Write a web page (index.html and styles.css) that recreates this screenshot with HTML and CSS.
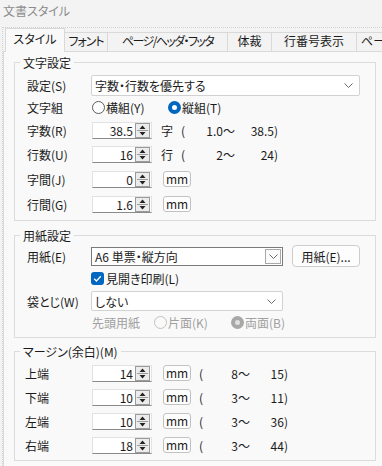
FILE: index.html
```html
<!DOCTYPE html>
<html lang="ja">
<head>
<meta charset="utf-8">
<title>文書スタイル</title>
<link rel="stylesheet" href="styles.css">
</head>
<body>
<div class="win">
  <div class="title">文書スタイル</div>
  <div class="tabctl">
    <div class="tabs">
      <div class="tab t1 active">スタイル</div>
      <div class="tab t2">フォント</div>
      <div class="tab t3">ページ/ヘッダ・フッタ</div>
      <div class="tab t4">体裁</div>
      <div class="tab t5">行番号表示</div>
      <div class="tab t6">ページ罫線</div>
    </div>
    <div class="panel">
      <fieldset class="grp g1">
        <legend>文字設定</legend>
        <div class="body">
          <span class="lbl">設定(S)</span>
          <div class="ctl"><div class="select wide"><span>字数・行数を優先する</span><svg class="chev" width="9" height="5" viewBox="0 0 9 5"><path d="M0.5 0.5 L4.5 4.5 L8.5 0.5" fill="none" stroke="#6a6a6a" stroke-width="1"/></svg></div></div>

          <span class="lbl">文字組</span>
          <div class="ctl">
            <span class="opt o1"><span class="radio"></span>横組(Y)</span>
            <span class="opt"><span class="radio on"></span>縦組(T)</span>
          </div>

          <span class="lbl">字数(R)</span>
          <div class="ctl">
            <div class="spin"><span class="val">38.5</span><span class="arrows"><svg width="13" height="15" viewBox="0 0 13 15"><path d="M3.5 6 L9.5 6 L6.5 2.5 Z" fill="#222"/><path d="M1 7.5 H12" stroke="#9a9a9a"/><path d="M3.5 9 L9.5 9 L6.5 12.5 Z" fill="#222"/></svg></span></div>
            <span class="unit">字</span><span class="paren">(</span><span class="from">1.0〜</span><span class="to">38.5)</span>
          </div>

          <span class="lbl">行数(U)</span>
          <div class="ctl">
            <div class="spin"><span class="val">16</span><span class="arrows"><svg width="13" height="15" viewBox="0 0 13 15"><path d="M3.5 6 L9.5 6 L6.5 2.5 Z" fill="#222"/><path d="M1 7.5 H12" stroke="#9a9a9a"/><path d="M3.5 9 L9.5 9 L6.5 12.5 Z" fill="#222"/></svg></span></div>
            <span class="unit">行</span><span class="paren">(</span><span class="from">2〜</span><span class="to">24)</span>
          </div>

          <span class="lbl">字間(J)</span>
          <div class="ctl">
            <div class="spin"><span class="val">0</span><span class="arrows"><svg width="13" height="15" viewBox="0 0 13 15"><path d="M3.5 6 L9.5 6 L6.5 2.5 Z" fill="#222"/><path d="M1 7.5 H12" stroke="#9a9a9a"/><path d="M3.5 9 L9.5 9 L6.5 12.5 Z" fill="#222"/></svg></span></div>
            <span class="mm">mm</span>
          </div>

          <span class="lbl">行間(G)</span>
          <div class="ctl">
            <div class="spin"><span class="val">1.6</span><span class="arrows"><svg width="13" height="15" viewBox="0 0 13 15"><path d="M3.5 6 L9.5 6 L6.5 2.5 Z" fill="#222"/><path d="M1 7.5 H12" stroke="#9a9a9a"/><path d="M3.5 9 L9.5 9 L6.5 12.5 Z" fill="#222"/></svg></span></div>
            <span class="mm">mm</span>
          </div>
        </div>
      </fieldset>

      <fieldset class="grp g2">
        <legend>用紙設定</legend>
        <div class="body">
          <span class="lbl">用紙(E)</span>
          <div class="ctl">
            <div class="combo"><span>A6 単票・縦方向</span><span class="dropbtn"><svg width="9" height="5" viewBox="0 0 9 5"><path d="M0.5 0.5 L4.5 4.5 L8.5 0.5" fill="none" stroke="#6a6a6a" stroke-width="1"/></svg></span></div>
            <span class="btn">用紙(E)...</span>
          </div>

          <span class="lbl"></span>
          <div class="ctl"><span class="check"><svg width="13" height="13" viewBox="0 0 13 13"><path d="M3.2 6.8 L5.4 9 L9.8 4.3" fill="none" stroke="#fff" stroke-width="1.3"/></svg></span><span class="cktext">見開き印刷(L)</span></div>

          <span class="lbl">袋とじ(W)</span>
          <div class="ctl"><div class="select mid"><span>しない</span><svg class="chev" width="9" height="5" viewBox="0 0 9 5"><path d="M0.5 0.5 L4.5 4.5 L8.5 0.5" fill="none" stroke="#6a6a6a" stroke-width="1"/></svg></div></div>

          <span class="lbl"></span>
          <div class="ctl dis">
            <span class="head">先頭用紙</span>
            <span class="opt o2"><span class="radio off"></span>片面(K)</span>
            <span class="opt"><span class="radio offon"></span>両面(B)</span>
          </div>
        </div>
      </fieldset>

      <fieldset class="grp g3">
        <legend>マージン(余白)(M)</legend>
        <div class="body">
          <span class="lbl">上端</span>
          <div class="ctl">
            <div class="spin"><span class="val">14</span><span class="arrows"><svg width="13" height="15" viewBox="0 0 13 15"><path d="M3.5 6 L9.5 6 L6.5 2.5 Z" fill="#222"/><path d="M1 7.5 H12" stroke="#9a9a9a"/><path d="M3.5 9 L9.5 9 L6.5 12.5 Z" fill="#222"/></svg></span></div>
            <span class="mm">mm</span><span class="paren p2">(</span><span class="from f2">8〜</span><span class="to t2">15)</span>
          </div>

          <span class="lbl">下端</span>
          <div class="ctl">
            <div class="spin"><span class="val">10</span><span class="arrows"><svg width="13" height="15" viewBox="0 0 13 15"><path d="M3.5 6 L9.5 6 L6.5 2.5 Z" fill="#222"/><path d="M1 7.5 H12" stroke="#9a9a9a"/><path d="M3.5 9 L9.5 9 L6.5 12.5 Z" fill="#222"/></svg></span></div>
            <span class="mm">mm</span><span class="paren p2">(</span><span class="from f2">3〜</span><span class="to t2">11)</span>
          </div>

          <span class="lbl">左端</span>
          <div class="ctl">
            <div class="spin"><span class="val">10</span><span class="arrows"><svg width="13" height="15" viewBox="0 0 13 15"><path d="M3.5 6 L9.5 6 L6.5 2.5 Z" fill="#222"/><path d="M1 7.5 H12" stroke="#9a9a9a"/><path d="M3.5 9 L9.5 9 L6.5 12.5 Z" fill="#222"/></svg></span></div>
            <span class="mm">mm</span><span class="paren p2">(</span><span class="from f2">3〜</span><span class="to t2">36)</span>
          </div>

          <span class="lbl">右端</span>
          <div class="ctl">
            <div class="spin"><span class="val">18</span><span class="arrows"><svg width="13" height="15" viewBox="0 0 13 15"><path d="M3.5 6 L9.5 6 L6.5 2.5 Z" fill="#222"/><path d="M1 7.5 H12" stroke="#9a9a9a"/><path d="M3.5 9 L9.5 9 L6.5 12.5 Z" fill="#222"/></svg></span></div>
            <span class="mm">mm</span><span class="paren p2">(</span><span class="from f2">3〜</span><span class="to t2">44)</span>
          </div>
        </div>
      </fieldset>
    </div>
  </div>
</div>
</body>
</html>
```

FILE: styles.css
```css
* { box-sizing: border-box; }
html, body { margin: 0; padding: 0; }
body {
  width: 382px;
  height: 466px;
  overflow: hidden;
  background: #f3f3f3;
  font-family: "Noto Sans CJK JP", "Noto Sans", sans-serif;
  font-size: 12px;
  color: #1b1b1b;
  font-feature-settings: "palt";
}
.win { width: 382px; height: 466px; overflow: hidden; }
.title {
  height: 27px;
  padding: 2px 0 0 3px;
  line-height: 17px;
  color: #8c8c8c;
}
.tabctl {
  margin-left: 2px;
  border-top: 1px dotted #d2d2d2;
  border-left: 1px dotted #d2d2d2;
  height: 439px;
}
.tabs {
  display: flex;
  align-items: flex-end;
  height: 23px;
  padding-left: 2px;
  white-space: nowrap;
}
.tab {
  height: 19px;
  line-height: 16px;
  padding: 0;
  text-align: center;
  border: 1px solid #d9d9d9;
  border-bottom: none;
  margin-left: -1px;
  background: #f3f3f3;
  flex: none;
  overflow: hidden;
}
.tab.t1 { width: 60px; }
.tab.t2 { width: 44px; letter-spacing: -1px; }
.tab.t3 { width: 121px; letter-spacing: -1.6px; }
.tab.t4 { width: 45px; }
.tab.t5 { width: 86px; }
.tab.t6 { width: 70px; text-align: left; padding-left: 4px; }
.tab.active {
  margin-left: 0;
  height: 24px;
  line-height: 19px;
  margin-bottom: -1px;
  background: #f9f9f9;
  position: relative;
  z-index: 1;
}
.panel {
  margin-left: 0;
  margin-right: -20px;
  height: 420px;
  background: #f9f9f9;
  border-top: 1px solid #d9d9d9;
  border-left: 1px solid #d9d9d9;
  padding: 3px 0 0 10px;
}
fieldset.grp {
  margin: 0;
  padding: 0;
  width: 362px;
  min-width: 0;
  border: 1px solid #dcdcdc;
}
legend {
  padding: 0 3px;
  margin-left: 5px;
  line-height: 15px;
  font-size: 12px;
}
.g2 { margin-top: 7px !important; }
.g3 { margin-top: 6px !important; }
.body {
  display: grid;
  grid-template-columns: 65px auto;
  padding: 4px 0 4px 12px;
}
.g1 .body { grid-template-rows: 22px 23px 23px 24px 26px 24px; }
.g2 .body { grid-template-rows: 22px 23px 22px 21px; padding-top: 2px; }
.g3 .body { grid-template-rows: 24px 24px 24px 24px; padding: 2px 0 3px 10px; grid-template-columns: 67px auto; }
.lbl { display: flex; align-items: center; white-space: nowrap; }
.ctl { display: flex; align-items: center; white-space: nowrap; }

.select {
  display: flex;
  align-items: center;
  justify-content: space-between;
  height: 21px;
  background: #fff;
  border: 1px solid #d2d2d2;
  border-radius: 2px;
  padding: 0 6px 0 3px;
}
.select.wide { width: 269px; margin-left: -1px; }
.select.mid { width: 192px; height: 20px; margin-left: -1px; }

.combo {
  display: flex;
  align-items: center;
  justify-content: space-between;
  width: 192px;
  height: 19px;
  margin-left: -1px;
  background: #fff;
  border: 1px solid #7a7a7a;
  padding: 0 1px 0 3px;
}
.dropbtn {
  width: 16px;
  height: 15px;
  border: 1px solid #a9a9a9;
  background: #fafafa;
  display: flex;
  align-items: center;
  justify-content: center;
}
.btn {
  margin-left: 9px;
  width: 68px;
  height: 22px;
  border: 1px solid #cdcdcd;
  border-radius: 4px;
  background: #fdfdfd;
  display: flex;
  align-items: center;
  justify-content: center;
}

.opt { display: inline-flex; align-items: center; }
.opt.o1 { width: 76px; }
.opt.o2 { width: 77px; }
.radio {
  width: 13px;
  height: 13px;
  border-radius: 50%;
  border: 1px solid #5c5c5c;
  background: #fff;
  margin-right: 1px;
  flex: none;
}
.radio.on { border: 4px solid #0067c0; background: #fff; }
.radio.off { border-color: #c2c2c2; background: #f9f9f9; }
.radio.offon { border: 4px solid #a8a8a8; background: #e0e0e0; }

.check {
  width: 13px;
  height: 13px;
  border-radius: 3px;
  background: #0067c0;
  margin-left: -1px;
  display: flex;
}
.cktext { margin-left: 2px; }

.dis { color: #a0a0a0; }
.head { width: 62px; }

.spin {
  width: 60px;
  height: 17px;
  background: #fff;
  border: 1px solid #e2e2e2;
  border-bottom-color: #8a8a8a;
  display: flex;
  align-items: center;
  justify-content: flex-end;
  padding-right: 1px;
}
.val { padding-right: 2px; line-height: 15px; }
.arrows {
  width: 15px;
  height: 15px;
  border: 1px solid #9a9a9a;
  background: #ececec;
  display: flex;
  align-items: center;
  justify-content: center;
}
.arrows svg { display: block; }
.unit { margin-left: 9px; }
.paren { margin-left: 8px; width: 6px; }
.from { width: 48px; text-align: right; }
.to { width: 43px; text-align: right; }
.p2 { margin-left: 8px; }
.f2 { width: 45px; }
.t2 { width: 38px; }
.mm {
  margin-left: 11px;
  width: 28px;
  height: 16px;
  border: 1px solid #c2c2c2;
  border-radius: 3px;
  background: #fdfdfd;
  text-align: center;
  line-height: 14px;
}
```
